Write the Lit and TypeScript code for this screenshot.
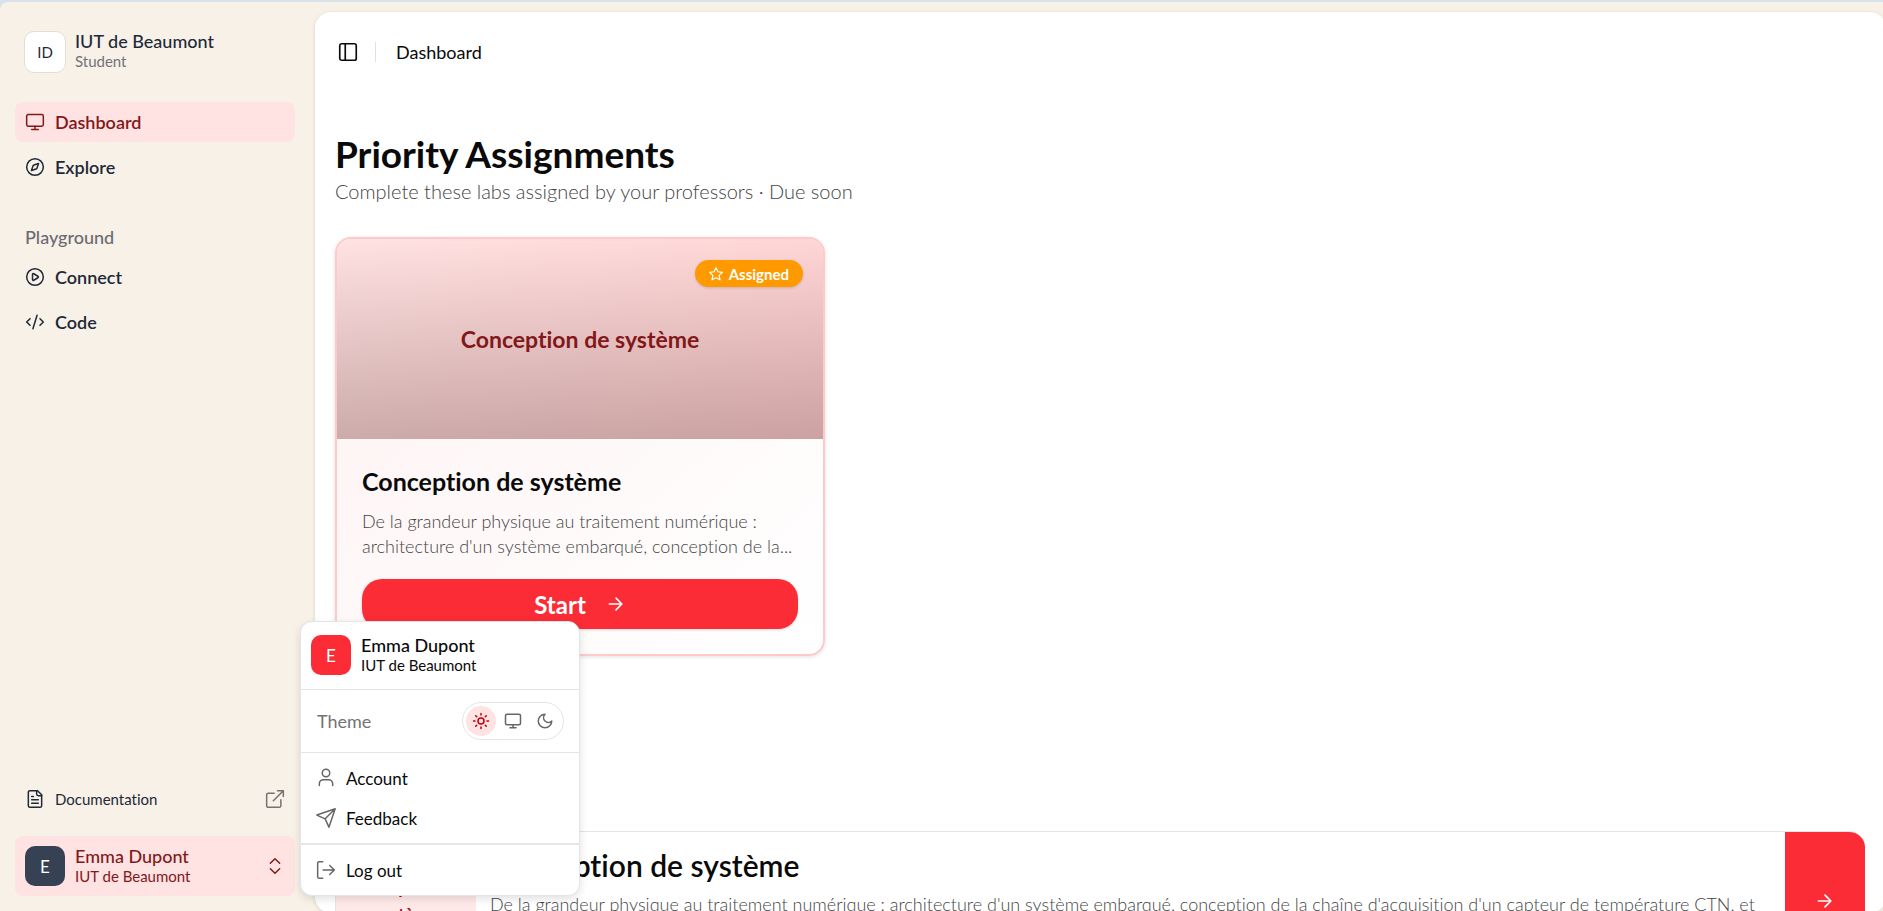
import { LitElement, html, css, svg } from "lit";
import { customElement, property } from "lit/decorators.js";
import { classMap } from "lit/directives/class-map.js";

const paths = {
  monitor: svg`<rect width="20" height="14" x="2" y="3" rx="2"/><path d="M8 21h8M12 17v4"/>`,
  compass: svg`<circle cx="12" cy="12" r="10"/><path d="m16.24 7.76-1.8 5.41a2 2 0 0 1-1.27 1.27l-5.41 1.8 1.8-5.41a2 2 0 0 1 1.27-1.27z"/>`,
  play: svg`<circle cx="12" cy="12" r="10"/><path d="M9 9v6a1 1 0 0 0 1.5.9l5-3a1 1 0 0 0 0-1.8l-5-3A1 1 0 0 0 9 9z"/>`,
  code: svg`<path d="m18 16 4-4-4-4M6 8l-4 4 4 4M14.5 4l-5 16"/>`,
  panel: svg`<rect width="18" height="18" x="3" y="3" rx="2"/><path d="M9 3v18"/>`,
  file: svg`<path d="M15 2H6a2 2 0 0 0-2 2v16a2 2 0 0 0 2 2h12a2 2 0 0 0 2-2V7z"/><path d="M14 2v4a2 2 0 0 0 2 2h4M10 9H8M16 13H8M16 17H8"/>`,
  external: svg`<path d="M15 2h7v7M10 14 22 2M19 13v7a2 2 0 0 1-2 2H4a2 2 0 0 1-2-2V7a2 2 0 0 1 2-2h7"/>`,
  chevrons: svg`<path d="m5 16 7 7 7-7M5 8l7-7 7 7"/>`,
  star: svg`<path d="M12 1.200l3.300 6.900 7.700 1-5.600 5.300 1.400 7.600-6.800-3.700-6.800 3.700 1.400-7.600L1 9.100l7.700-1z"/>`,
  arrow: svg`<path d="M4 12h15M12 5l7 7-7 7"/>`,
  sun: svg`<circle cx="12" cy="12" r="4"/><path d="M12 2v2M12 20v2M4.930 4.930l1.410 1.410M17.660 17.660l1.410 1.410M2 12h2M20 12h2M6.340 17.660l-1.410 1.410M19.070 4.930l-1.410 1.410"/>`,
  moon: svg`<path d="M12 3a6 6 0 0 0 9 9 9 9 0 1 1-9-9Z"/>`,
  user: svg`<path d="M20 21v-2a5 5 0 0 0-5-5H9a5 5 0 0 0-5 5v2"/><circle cx="12" cy="6" r="4.500"/>`,
  send: svg`<path d="M23 1 15.500 23l-4.500-10L1 8.500zM23 1 11 13"/>`,
  logout: svg`<path d="M8 2H4a2 2 0 0 0-2 2v16a2 2 0 0 0 2 2h4M8.500 12H22M16.500 6.500 22 12l-5.500 5.500"/>`,
};

@customElement("ui-icon")
export class UiIcon extends LitElement {
  @property() name: keyof typeof paths = "monitor";
  static styles = css`
    :host { display: block; width: 20px; height: 20px; flex: none; }
    svg { display: block; width: 100%; height: 100%; overflow: visible; fill: none; stroke: currentColor;
      stroke-width: var(--stroke, 1.8); stroke-linecap: round; stroke-linejoin: round; }
  `;
  render() {
    return html`<svg viewBox="0 0 24 24" aria-hidden="true">${paths[this.name]}</svg>`;
  }
}

const person = (initial: string, name: string, org: string, kind: string) => html`
  <span class="avatar ${kind}">${initial}</span>
  <span class="who"><span class="name">${name}</span><span class="org">${org}</span></span>
`;

const navItem = (icon: string, label: string, active = false) => html`
  <a href="#" class=${classMap({ item: true, active })}><ui-icon name=${icon}></ui-icon>${label}</a>
`;

@customElement("app-root")
export class AppRoot extends LitElement {
  static styles = css`
    :host {
      display: block; position: relative; height: 100vh; overflow: hidden; background: #d8e2ea;
      font-family: Lato, sans-serif; font-size: 18px; font-weight: 400; font-variant-ligatures: none; color: #0a0a0a;
    }
    * { box-sizing: border-box; }
    h1, h2, h3, p { margin: 0; }
    a { color: inherit; text-decoration: none; }
    button { font: inherit; color: inherit; border: 0; padding: 0; background: none; text-align: left; }

    .shell { display: flex; height: 100%; margin-top: 2px; background: #f8f1e7; border-top-left-radius: 8px; }
    .sidebar { flex: none; width: 315px; padding: 0 20px 17px 15px; display: flex; flex-direction: column; color: #1e2939; }

    .avatar { flex: none; width: 40px; height: 40px; border-radius: 10px; display: grid; place-items: center;
      font-size: 17px; color: #fff; }
    .avatar.school { width: 42px; height: 42px; background: #fff; border: 1px solid #e6ddd0; font-size: 15px; color: #1e2939; }
    .avatar.slate { background: #364153; }
    .avatar.red { background: #fb2c36; }
    .who { display: flex; flex-direction: column; align-self: flex-start; line-height: 20px; white-space: nowrap; }
    .name { font-weight: 500; }
    .org { font-size: 15px; }

    .brand { display: flex; gap: 9px; padding: 29px 0 29px 9px; }
    .brand .org { color: #71717a; }
    .nav { display: flex; flex-direction: column; gap: 5px; }
    .item { display: flex; align-items: center; gap: 10px; height: 40px; padding-left: 10px; border-radius: 8px; font-weight: 600; }
    .active { background: #ffe2e2; color: #82181a; }
    .group { font-size: 18px; line-height: 30px; margin: 35px 0 5px; padding-left: 10px; color: #6b6b72; font-weight: 500; }
    .foot { margin-top: auto; display: flex; flex-direction: column; gap: 17px; }
    .doc { display: flex; align-items: center; gap: 10px; height: 40px; padding: 0 10px; font-size: 15px; }
    .doc .ext { margin-left: auto; color: #737373; }
    .account { display: flex; align-items: center; gap: 10px; height: 60px; padding: 10px; border-radius: 8px; }
    .account ui-icon { margin-left: auto; width: 16px; height: 16px; margin-right: 2px; --stroke: 2.2; }

    .panel { flex: 1; min-width: 0; margin: 10px -3px 0 0; background: #fff; border-radius: 16px; box-shadow: 0 1px 4px rgb(0 0 0 / 0.12); }
    .bar { display: flex; align-items: center; height: 80px; padding-left: 22px; }
    .bar ui-icon { width: 22px; height: 22px; }
    .bar .here { margin-left: 16px; padding-left: 20px; border-left: 1px solid #e0e0e0; line-height: 20px; }
    .content { padding: 40px 21px 0 20px; }
    .heading { font-size: 37px; line-height: 44px; font-weight: 700; }
    .lead { font-size: 20px; line-height: 25px; margin-top: 3px; font-weight: 300; color: #444; }

    .cards { display: grid; grid-template-columns: repeat(3, 1fr); gap: 30px; margin-top: 33px; }
    .card { border: 2px solid #ffc9c9; border-radius: 16px; overflow: hidden; box-shadow: 0 1px 4px rgb(0 0 0 / 0.12);
      background: linear-gradient(to bottom right, #fef2f2, #fff); background-clip: padding-box; }
    .cover { position: relative; height: 200px; display: grid; place-items: center; font-size: 23px; font-weight: 700; color: #82181a;
      background: linear-gradient(to top, rgb(0 0 0 / 0.2), transparent), linear-gradient(to bottom right, #ffe2e2, #ffc9c9); }
    .badge { position: absolute; top: 21px; right: 20px; display: flex; align-items: center; gap: 6px; height: 27px; padding: 0 14px;
      border-radius: 14px; background: #fe9a00; color: #fff; font-size: 15px; font-weight: 700; box-shadow: 0 1px 3px rgb(0 0 0 / 0.15); }
    .badge ui-icon { width: 14px; height: 14px; --stroke: 2; }
    .body { padding: 25px; }
    .title { font-size: 25px; line-height: 34px; font-weight: 700; }
    .text { font-size: 18px; line-height: 25px; font-weight: 300; color: #444; }
    .body .text { margin: 11px 0 20px; }
    .start { display: flex; align-items: center; justify-content: center; gap: 20px; width: 100%; height: 50px; border-radius: 20px;
      background: #fb2c36; color: #fff; font-size: 24px; font-weight: 700; box-shadow: 0 1px 3px rgb(0 0 0 / 0.15); }
    .start ui-icon, .go ui-icon { --stroke: 2; }

    .row { display: flex; height: 140px; margin-top: 175px; border: 1px solid #e5e5e5; border-right: 0; border-radius: 16px; overflow: hidden; }
    .thumb { flex: none; width: 140px; display: grid; place-items: center; text-align: center; line-height: 28px; font-weight: 700;
      color: #9f0712; background: linear-gradient(to bottom, #f3e2e2, #ffe9e9 50%, #f6e6e6); }
    .info { flex: 1; min-width: 0; padding: 13px 20px 0 14px; }
    .info .title { font-size: 30px; line-height: 40px; font-weight: 600; }
    .info .text { margin-top: 7px; }
    .go { flex: none; width: 80px; background: #fb2c36; color: #fff; display: grid; place-items: center; }

    .menu { position: absolute; left: 300px; bottom: 15px; width: 280px; border: 1px solid #e5e5e5; border-radius: 12px; background: #fff;
      box-shadow: 0 3px 8px rgb(0 0 0 / 0.12); }
    .profile { display: flex; gap: 10px; padding: 13px 10px 14px; border-bottom: 1px solid #e5e5e5; }
    .theme { display: flex; align-items: center; justify-content: space-between; height: 63px; padding: 0 15px 0 16px; border-bottom: 1px solid #e5e5e5; color: #737373; font-size: 18px; }
    .switch { display: flex; gap: 2px; padding: 3px; border: 1px solid #e5e5e5; border-radius: 20px; }
    .switch button { display: grid; place-items: center; width: 30px; height: 30px; border-radius: 15px; color: #666; }
    .switch ui-icon { width: 18px; height: 18px; --stroke: 2; }
    .switch .on { background: #ffe2e2; color: #c10007; }
    .actions { padding: 5px; }
    .actions + .actions { border-top: 2px solid #e5e5e5; }
    .actions button { display: flex; align-items: center; gap: 10px; width: 100%; height: 40px; padding-left: 10px; font-size: 17px; }
    .actions ui-icon { color: #666; }
  `;

  render() {
    return html`
      <div class="shell">
        <aside class="sidebar">
          <div class="brand">${person("ID", "IUT de Beaumont", "Student", "school")}</div>
          <nav class="nav">${navItem("monitor", "Dashboard", true)}${navItem("compass", "Explore")}</nav>
          <div class="group">Playground</div>
          <nav class="nav">${navItem("play", "Connect")}${navItem("code", "Code")}</nav>
          <div class="foot">
            <a href="#" class="doc"><ui-icon name="file"></ui-icon>Documentation<ui-icon class="ext" name="external"></ui-icon></a>
            <button class="account active" aria-expanded="true">
              ${person("E", "Emma Dupont", "IUT de Beaumont", "slate")}<ui-icon name="chevrons"></ui-icon>
            </button>
          </div>
        </aside>
        <main class="panel">
          <header class="bar">
            <button aria-label="Toggle sidebar"><ui-icon name="panel"></ui-icon></button>
            <span class="here">Dashboard</span>
          </header>
          <div class="content">
            <h1 class="heading">Priority Assignments</h1>
            <p class="lead">Complete these labs assigned by your professors · Due soon</p>
            <div class="cards">
              <article class="card">
                <div class="cover">
                  Conception de système
                  <span class="badge"><ui-icon name="star"></ui-icon>Assigned</span>
                </div>
                <div class="body">
                  <h2 class="title">Conception de système</h2>
                  <p class="text">De la grandeur physique au traitement numérique : architecture d'un système embarqué, conception de la...</p>
                  <button class="start">Start<ui-icon name="arrow"></ui-icon></button>
                </div>
              </article>
            </div>
            <article class="row">
              <div class="thumb">Conception de système</div>
              <div class="info">
                <h3 class="title">Conception de système</h3>
                <p class="text">De la grandeur physique au traitement numérique : architecture d'un système embarqué, conception de la chaîne d'acquisition d'un capteur de température CTN, et</p>
              </div>
              <button class="go" aria-label="Open"><ui-icon name="arrow"></ui-icon></button>
            </article>
          </div>
        </main>
      </div>
      <div class="menu">
        <div class="profile">${person("E", "Emma Dupont", "IUT de Beaumont", "red")}</div>
        <div class="theme">
          Theme
          <div class="switch">
            <button class="on" aria-label="Light"><ui-icon name="sun"></ui-icon></button>
            <button aria-label="System"><ui-icon name="monitor"></ui-icon></button>
            <button aria-label="Dark"><ui-icon name="moon"></ui-icon></button>
          </div>
        </div>
        <div class="actions">
          <button><ui-icon name="user"></ui-icon>Account</button>
          <button><ui-icon name="send"></ui-icon>Feedback</button>
        </div>
        <div class="actions"><button><ui-icon name="logout"></ui-icon>Log out</button></div>
      </div>
    `;
  }
}
